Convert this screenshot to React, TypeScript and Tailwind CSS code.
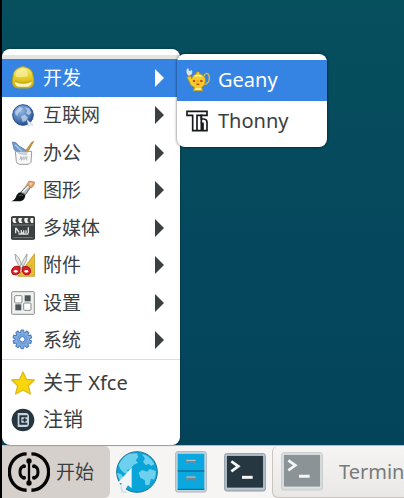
import type { ReactNode } from 'react';

function Icon({ children }: { children: ReactNode }) {
  return (
    <svg viewBox="0 0 72 72" className="size-6 shrink-0" aria-hidden="true">
      {children}
    </svg>
  );
}

const HelmetIcon = () => (
  <Icon>
    <defs>
      <linearGradient id="helmet" x1="0" y1="0" x2="0" y2="1">
        <stop offset="0" stopColor="#f6ec84" />
        <stop offset="0.45" stopColor="#e8d02c" />
        <stop offset="1" stopColor="#cfae0c" />
      </linearGradient>
    </defs>
    <path d="M5 40 L8 20 Q13 9 25 5 Q36 -1 47 5 Q60 9 64 20 L68 40 V52 Q66 65 52 66 H20 Q7 65 5 53Z" fill="url(#helmet)" stroke="#c3a40f" strokeWidth="3" />
    <path d="M14 21 Q17 13 25 11 Q36 5 47 11 L52 30 Q36 36 14 32Z" fill="#fbf5b8" opacity="0.6" />
    <path d="M12 42 Q36 53 61 42 V47 Q36 58 12 47Z" fill="#d0b012" />
    <path d="M11 48 Q36 60 62 48 Q60 61 50 62 H24 Q12 61 11 48Z" fill="#fbf6c4" />
  </Icon>
);

const GlobeIcon = () => (
  <Icon>
    <defs>
      <radialGradient id="globe" cx="0.4" cy="0.3" r="0.75">
        <stop offset="0" stopColor="#94b8e2" />
        <stop offset="0.55" stopColor="#5681bd" />
        <stop offset="1" stopColor="#1f4581" />
      </radialGradient>
    </defs>
    <circle cx="36" cy="36" r="31" fill="url(#globe)" stroke="#2d548f" strokeWidth="3" />
    <path d="M12 26 L26 12 L35 15 L30 24 L22 30 L20 38 L14 36Z M42 12 L54 16 L61 29 L54 37 L45 30 L49 23Z M30 40 L42 35 L51 44 L44 54 L35 57Z" fill="#c4d8ef" opacity="0.75" />
    <path d="M48 50 L66 66 L58 65 L53 70Z" fill="#f5f7fb" stroke="#b4c3da" strokeWidth="2" />
  </Icon>
);

const OfficeIcon = () => (
  <Icon>
    <path d="M62 4 L68 1 L48 37 L38 38Z" fill="#d49a37" stroke="#9b7130" strokeWidth="2" />
    <path d="M4 3 L15 5 L24 15 L44 27 L46 42 L24 38 L9 25Z" fill="#6f9acb" stroke="#426b9f" strokeWidth="2" />
    <path d="M12 11 L36 34" stroke="#b3cae5" strokeWidth="4" />
    <path d="M13 31 H62 L60 64 Q57 70 48 70 H26 Q17 70 16 61Z" fill="#f5f5f4" fillOpacity="0.65" stroke="#979b98" strokeWidth="3" />
    <path d="M26 56 L31 48 V58 L39 47 V56 L47 48 V58" fill="none" stroke="#a9b6ca" strokeWidth="3" />
    <path d="M27 48 H34 M43 48 H50" stroke="#dfb279" strokeWidth="3" />
  </Icon>
);

const BrushIcon = () => (
  <Icon>
    <path d="M1 70 Q14 65 17 51 Q24 39 37 43 Q46 48 41 60 Q36 71 20 70Z" fill="#101314" />
    <path d="M29 43 L51 19 L60 26 L43 50Z" fill="#babdb8" stroke="#5f625e" strokeWidth="3" />
    <path d="M35 42 L53 24" stroke="#f2f3f0" strokeWidth="4" />
    <path d="M47 20 L54 9 L71 12 Q70 25 61 30Z" fill="#e3a26c" stroke="#b78257" strokeWidth="2" />
    <path d="M54 15 L65 15 L59 24Z" fill="#f3ceac" />
    <path d="M24 53 Q32 48 36 54" fill="none" stroke="#5b6161" strokeWidth="3" />
  </Icon>
);

const ClapperIcon = () => (
  <Icon>
    <rect x="1" y="2" width="70" height="68" rx="3" fill="#3c4142" stroke="#292d2e" strokeWidth="3" />
    <path d="M5 6 h11 q-6 7 1 15 h-9 q-5 -7 -3 -15Z M23 6 h11 q-6 7 1 15 h-9 q-7 -7 -3 -15Z M41 6 h11 q-6 7 1 15 h-9 q-7 -7 -3 -15Z M59 6 h8 v15 h-6 q-6 -7 -2 -15Z" fill="#f3f4f2" />
    <path d="M4 27 H68 M7 65 H65" stroke="#989d9c" strokeWidth="2" />
    <path d="M14 35 V52 M15 36 L25 50 M31 42 V51 H38 V43 M45 51 V43 M52 34 V52 M22 54 H52" fill="none" stroke="#dfe1de" strokeWidth="4" />
  </Icon>
);

const ScissorsIcon = () => (
  <Icon>
    <path d="M71 2 V70 H20Z" fill="#e8bd31" stroke="#b88b16" strokeWidth="2" />
    <path d="M61 36 V60 H44Z" fill="#f8e9ae" stroke="#c39826" strokeWidth="2" />
    <path d="M12 3 L23 14 L37 45 L30 49 L14 20Z M48 3 L40 16 L25 45 L32 50 L47 20Z" fill="#e4e6e3" stroke="#7e8380" strokeWidth="2" />
    <path d="M28 42 Q13 36 5 45 Q-3 55 5 64 Q17 70 26 59Z M35 42 Q49 36 57 46 Q62 58 53 65 Q41 69 34 57Z" fill="#d82128" stroke="#a81017" strokeWidth="3" />
    <ellipse cx="14" cy="55" rx="6" ry="4" fill="#fff" />
    <ellipse cx="46" cy="55" rx="6" ry="4" fill="#fff" />
    <circle cx="31" cy="45" r="3" fill="#f3a4a0" />
  </Icon>
);

const SettingsIcon = () => (
  <Icon>
    <rect x="2" y="2" width="68" height="68" rx="3" fill="#f0f0ef" stroke="#8a8d88" strokeWidth="3" />
    <rect x="41" y="13" width="18" height="18" fill="#4a5557" />
    <rect x="13" y="40" width="18" height="18" fill="#4a5557" />
    <rect x="11" y="14" width="22" height="22" rx="3" fill="#fff" stroke="#858987" strokeWidth="3" />
    <rect x="38" y="36" width="22" height="22" rx="3" fill="#fff" stroke="#858987" strokeWidth="3" />
  </Icon>
);

const GEAR_ANGLES = [0, 36, 72, 108, 144, 180, 216, 252, 288, 324];

const GearIcon = () => (
  <Icon>
    {GEAR_ANGLES.map((angle) => (
      <path key={angle} d="M28 18 L30 6 H38 L40 18Z" fill="#83ace0" stroke="#4679bd" strokeWidth="3" transform={`rotate(${angle} 34 34)`} />
    ))}
    <circle cx="34" cy="34" r="20" fill="#83ace0" />
    <circle cx="34" cy="34" r="14" fill="none" stroke="#5f92d0" strokeWidth="3" />
    <circle cx="34" cy="34" r="8" fill="#fff" stroke="#3f74b9" strokeWidth="3" />
  </Icon>
);

const StarIcon = () => (
  <Icon>
    <path d="M36 3 L46 25 L70 27 L52 44 L58 69 L36 57 L14 69 L20 44 L2 27 L26 25Z" fill="#f7d70a" stroke="#e3b81c" strokeWidth="4" strokeLinejoin="round" />
  </Icon>
);

const LogoutIcon = () => (
  <Icon>
    <circle cx="36" cy="36" r="34" fill="#263641" />
    <path d="M20 15 H47 Q54 17 54 25 V48 Q54 55 47 57 H20Z" fill="#c9d3db" />
    <path d="M49 25 H28 V47 H49" fill="none" stroke="#263641" strokeWidth="6" />
    <path d="M34 36 H48 M41 29 V43" stroke="#263641" strokeWidth="5" />
  </Icon>
);

const GeanyIcon = () => (
  <Icon>
    <path d="M8 23 Q-1 17 2 8 Q0 2 8 1 Q6 7 13 10 Q18 1 19 12 Q18 22 9 23Z" fill="#d9e4ef" />
    <path d="M54 25 Q58 13 67 18 Q75 34 64 45 Q58 51 51 48" fill="none" stroke="#d9bb3c" strokeWidth="4" />
    <path d="M3 28 L13 24 L17 33 Q20 21 31 18 L32 12 H39 L41 18 Q56 21 58 36 Q58 52 47 58 L50 68 H22 L26 58 Q12 53 11 42Z" fill="#f3cf26" stroke="#c99a1a" strokeWidth="2" />
    <path d="M26 25 Q36 20 46 25 M28 63 H45" fill="none" stroke="#fff3a3" strokeWidth="4" />
    <circle cx="24" cy="39" r="4" fill="#d8452a" />
    <circle cx="46" cy="39" r="4" fill="#d8452a" />
    <path d="M31 49 H40" stroke="#d8452a" strokeWidth="5" />
    <circle cx="36" cy="40" r="3" fill="#e8971c" />
  </Icon>
);

const ThonnyIcon = () => (
  <Icon>
    <path d="M3 7 H63 V19 H46 V30 H54 Q63 31 63 40 V65 H51 V43 H46 V65 H20 V19 H3Z" fill="#fff" stroke="#171a1b" strokeWidth="5" />
    <path d="M33 65 V19 H46 V43" fill="none" stroke="#171a1b" strokeWidth="5" />
  </Icon>
);

const StartLogo = () => (
  <svg viewBox="0 0 126 132" className="h-11 w-[42px] shrink-0" fill="none" stroke="#050505" aria-hidden="true">
    <path d="M55 6 A57 60 0 0 0 55 126 M71 6 A57 60 0 0 1 71 126" strokeWidth="11" transform="translate(6 6) scale(0.905 0.91)" />
    <path d="M63 32 V100" strokeWidth="7" />
    <circle cx="63" cy="33" r="8" fill="#050505" stroke="none" />
    <circle cx="63" cy="99" r="8" fill="#050505" stroke="none" />
    <path d="M48 48 Q36 51 36 66 Q36 81 48 84 M78 48 Q90 51 90 66 Q90 81 78 84" strokeWidth="9" />
    <g fill="#050505" stroke="none">
      <circle cx="48" cy="49" r="6" />
      <circle cx="48" cy="83" r="6" />
      <circle cx="78" cy="49" r="6" />
      <circle cx="78" cy="83" r="6" />
    </g>
  </svg>
);

const BrowserIcon = () => (
  <svg viewBox="0 0 126 126" className="size-[42px]" aria-hidden="true">
    <circle cx="63" cy="63" r="61" fill="#0aa5d8" stroke="#19789c" strokeWidth="3" />
    <path d="M8 42 Q18 18 40 8 L63 7 L67 18 L59 28 L66 35 L52 42 L43 55 L32 57 L43 69 L24 66 L13 55Z M78 9 Q103 14 115 39 L106 45 L98 38 L90 43 L81 32 L87 23Z M68 65 L78 57 L94 62 L101 54 L120 60 Q120 76 114 86 L105 83 L99 103 L88 101 L86 87 L73 80Z M3 65 L16 70 L24 84 L18 95 Q6 84 3 65Z" fill="#6dd0ef" />
    <path d="M47 50 V112 L36 103 L24 124 L10 118 L17 96 H4Z" fill="#f1f4f5" />
    <path d="M15 104 L18 122 L31 124" fill="none" stroke="#cfd9dd" strokeWidth="4" />
  </svg>
);

const FilesIcon = () => (
  <svg viewBox="0 0 96 126" className="h-[42px] w-8" aria-hidden="true">
    <rect x="2" y="2" width="92" height="121" rx="6" fill="#c9d5dc" stroke="#a7b4bf" strokeWidth="3" />
    <path d="M8 8 H88 V115 H8Z" fill="#0aa8df" />
    <path d="M8 60 H88 M8 115 H88" stroke="#075d7b" strokeWidth="3" />
    <path d="M34 27 H62 V39 H56 V34 H40 V39 H34Z M34 77 H62 V89 H56 V84 H40 V89 H34Z" fill="#7d878e" />
    <path d="M34 28 H62 M34 78 H62" stroke="#c4cbd0" strokeWidth="3" />
  </svg>
);

function TerminalIcon({ faded = false }: { faded?: boolean }) {
  return (
    <svg viewBox="0 0 126 117" className="h-[39px] w-[42px] shrink-0" aria-hidden="true">
      <rect x="2" y="2" width="122" height="112" rx="6" fill={faded ? '#d9dddf' : '#b4c0c9'} stroke={faded ? '#c6cbce' : '#8f9ca6'} strokeWidth="3" />
      <rect x="7" y="7" width="112" height="98" fill={faded ? '#8c9396' : '#263742'} stroke={faded ? '#eef0f0' : '#d7dfe4'} strokeWidth="2" />
      <path d="M22 25 L43 40 L22 55" fill="none" stroke="#f4f5f5" strokeWidth="8" />
      <path d="M54 73 H86" stroke="#f4f5f5" strokeWidth="9" />
    </svg>
  );
}

function Arrow() {
  return (
    <svg viewBox="0 0 9 18" className="ml-auto h-[18px] w-[9px]" fill="currentColor" aria-hidden="true">
      <path d="M0 0 L9 9 L0 18Z" />
    </svg>
  );
}

const categories = [
  { label: '开发', icon: <HelmetIcon />, active: true },
  { label: '互联网', icon: <GlobeIcon /> },
  { label: '办公', icon: <OfficeIcon /> },
  { label: '图形', icon: <BrushIcon /> },
  { label: '多媒体', icon: <ClapperIcon /> },
  { label: '附件', icon: <ScissorsIcon /> },
  { label: '设置', icon: <SettingsIcon /> },
  { label: '系统', icon: <GearIcon /> },
];

const actions = [
  { label: '关于 Xfce', icon: <StarIcon /> },
  { label: '注销', icon: <LogoutIcon /> },
];

const apps = [
  { label: 'Geany', icon: <GeanyIcon />, active: true },
  { label: 'Thonny', icon: <ThonnyIcon /> },
];

function MenuItem({ label, icon, active = false, arrow = false }: { label: string; icon: ReactNode; active?: boolean; arrow?: boolean }) {
  return (
    <button
      type="button"
      role="menuitem"
      className={`flex h-full w-full items-center gap-2 whitespace-nowrap text-left ${active ? 'bg-[#3584e4] text-white' : 'text-[#3a4042]'}`}
    >
      {icon}
      <span>{label}</span>
      {arrow && <Arrow />}
    </button>
  );
}

export default function App() {
  return (
    <div className="flex min-h-screen flex-col overflow-hidden border-l-2 border-black bg-linear-to-b from-[#064f5d] via-[#05485d] via-50% to-[#04435a] font-['Noto_Sans','Noto_Sans_CJK_SC',sans-serif] text-[20px] leading-6">
      <main className="flex flex-1 items-end">
        <div className="relative w-[178px]">
          <div role="menu" aria-label="开始" className="overflow-hidden rounded-lg bg-white pt-1.5 pb-1.5 shadow-[0_0_2px_#0008]">
            <div className="h-1 bg-[#e4e4e3]" />
            <div className="grid h-[300px] grid-rows-8 text-[19px] [&>button]:pr-4 [&>button]:pl-[9px]">
              {categories.map((item) => (
                <MenuItem key={item.label} {...item} arrow />
              ))}
            </div>
            <hr className="mb-1 border-[#dcdcdb]" />
            <div className="grid h-[75px] grid-rows-2 [&>button]:pl-[9px]">
              {actions.map((item) => (
                <MenuItem key={item.label} {...item} />
              ))}
            </div>
          </div>
          <div role="menu" aria-label="开发" className="absolute top-[5px] left-[175px] grid h-[93px] w-[150px] grid-rows-2 rounded-lg bg-white py-1.5 shadow-[0_0_3px_#000a] [&>button]:pl-[9px]">
            {apps.map((item) => (
              <MenuItem key={item.label} {...item} />
            ))}
          </div>
        </div>
      </main>
      <nav className="flex h-[53px] border-t border-[#b9bbb8] bg-[#f6f5f4]">
        <button type="button" className="flex w-[108px] shrink-0 items-center gap-1.5 rounded-r-md bg-[#d5d0cc] pl-1.5 text-[19px] text-[#3a4042]">
          <StartLogo />
          <span>开始</span>
        </button>
        <div className="flex shrink-0 items-center gap-[17px] px-1.5">
          <button type="button" aria-label="Web"><BrowserIcon /></button>
          <button type="button" aria-label="Files"><FilesIcon /></button>
          <button type="button" aria-label="Terminal"><TerminalIcon /></button>
        </div>
        <button type="button" className="flex flex-1 items-center gap-4 overflow-hidden rounded-l-md border-b border-l border-[#c9c4bf] bg-linear-to-b from-[#f6f5f4] to-[#eae8e6] pl-2 text-[#777b7c]">
          <TerminalIcon faded />
          <span>Termin</span>
        </button>
      </nav>
    </div>
  );
}
